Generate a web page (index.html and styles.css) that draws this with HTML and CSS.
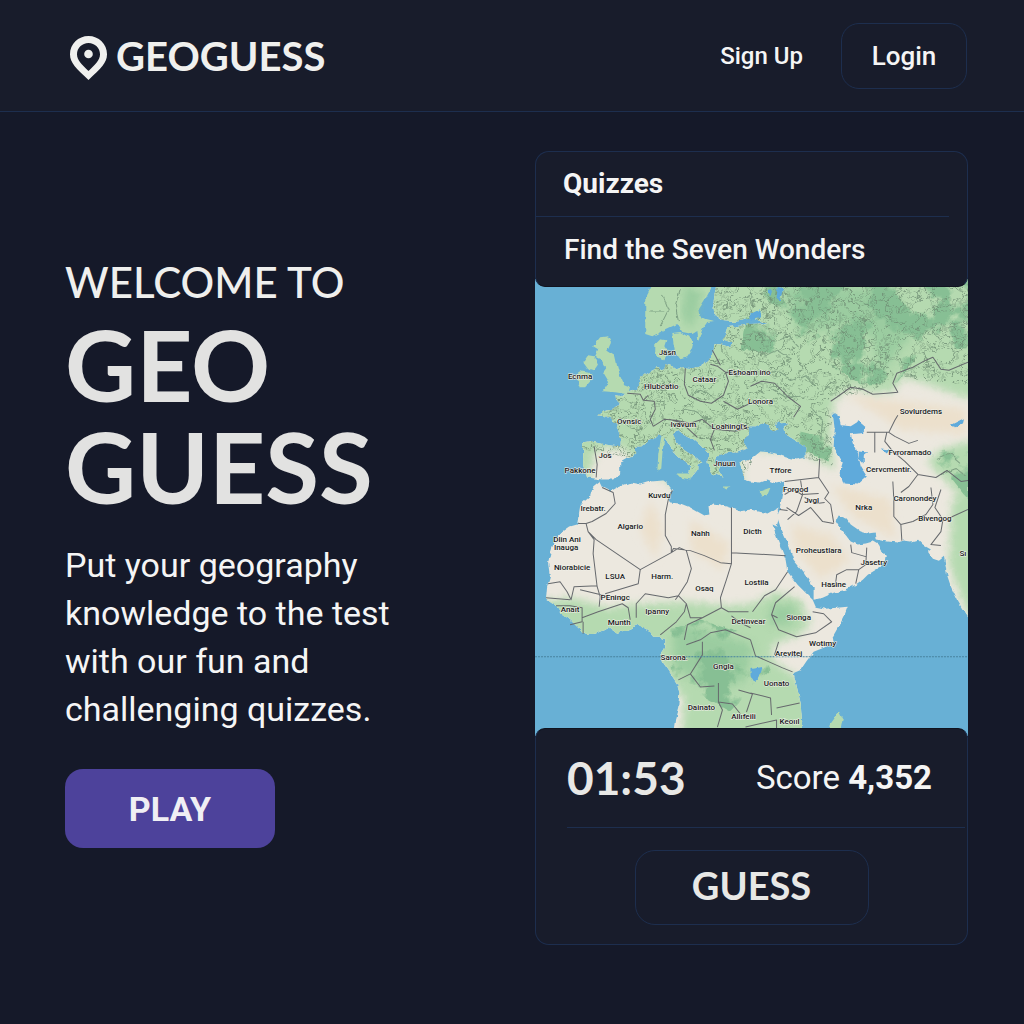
FILE: index.html
```html
<!DOCTYPE html>
<html lang="en">
<head>
<meta charset="utf-8">
<meta name="viewport" content="width=device-width, initial-scale=1">
<title>GeoGuess</title>
<link rel="stylesheet" href="styles.css">
</head>
<body>
<header class="site-header">
  <a class="brand" href="#">
    <svg class="brand-pin" viewBox="0 0 37 44" aria-hidden="true">
      <path fill-rule="evenodd" d="M18.500 0C8.300 0 0 8 0 18.200C0 27 6 32 18.500 44C31 32 37 27 37 18.200C37 8 28.700 0 18.500 0ZM18.500 7C24.900 7 30 12 30 18.200C30 24.500 25 28.500 18.500 35C12 28.500 7 24.500 7 18.200C7 12 12.100 7 18.500 7Z"/>
      <circle cx="18.500" cy="18" r="4.300"/>
    </svg>
    <span>GEOGUESS</span>
  </a>
  <nav class="site-nav">
    <a class="sign-up" href="#">Sign Up</a>
    <button class="outline-button login" type="button">Login</button>
  </nav>
</header>

<main class="hero">
  <section class="intro">
    <h1 class="title"><span class="eyebrow">WELCOME TO</span> GEO GUESS</h1>
    <p class="lead">Put your geography knowledge to the test with our fun and challenging quizzes.</p>
    <button class="play" type="button">PLAY</button>
  </section>

  <section class="game">
    <div class="panel panel-top">
      <h2 class="quiz-heading">Quizzes</h2>
      <p class="quiz-name">Find the Seven Wonders</p>
    </div>

    <svg class="map" viewBox="535 280 432 456" preserveAspectRatio="xMidYMid slice" role="img" aria-label="Map of Europe, Africa and Asia">
      <defs>
        <path id="eurasia" d="M583 443L590 442L600 444L611 446L620 447L621 440L616 425L612 420L605 417L598 416L605 412L617 408L620 404L617 400L616 396L622 397L627 393L637 390L640 378L650 372L656 370L657 367L661 370L664 369L665 365L672 367L676 370L683 368L692 369L700 367L708 362L713 352L714 345L720 345L730 348L731 343L723 340L727 328L738 327L750 325L768 324L750 319L735 323L722 322L714 316L713 305L714 296L717 280H970V622L962 610L956 600L950 587L946 575L945 567L943 557L938 561L932 559L927 552L930 550L923 546L917 540L910 542L903 541L897 543L886 542L875 540L874 533L867 534L860 532L850 525L846 519L843 518L838 516L835 522L840 530L846 537L850 542L857 545L865 544L872 542L877 545L880 551L885 555L884 561L880 567L867 575L862 580L855 585L845 590L833 593L822 598L813 600L813 588L803 572L793 560L787 543L780 528L777 518L779 510L782 493L783 482L776 484L767 480L759 483L750 482L743 480L742 470L739 464L743 462L750 460L760 452L771 453L783 457L795 460L805 458L805 448L793 440L785 435L784 429L788 423L782 424L778 422L774 426L778 430L773 432L767 425L761 424L757 427L750 427L748 433L744 440L743 443L747 449L737 453L727 453L717 457L714 462L720 466L718 471L722 477L716 475L713 476L708 467L707 461L709 455L700 446L693 440L684 436L677 430L673 435L677 443L683 450L692 456L696 459L703 463L697 465L697 470L691 478L688 472L690 467L684 462L673 453L668 444L663 437L658 435L653 440L647 442L641 447L635 447L636 455L627 458L620 462L620 473L613 480L602 480L595 479L587 478L583 467Z"/>
        <path id="africa" d="M599 482L602 488L610 492L617 488L630 483L640 485L650 482L662 481L668 485L672 491L668 498L670 503L680 504L690 508L697 512L704 516L709 515L708 507L712 504L720 505L730 508L740 512L750 510L767 514L777 508L778 520L776 527L772 525L777 540L785 560L787 572L797 585L812 600L815 607L825 609L847 607L844 615L840 623L832 637L833 643L823 648L813 652L806 661L800 670L793 673L797 690L800 703L802 728V740H672L675 718L678 707L679 693L677 684L673 678L668 670L663 663L660 655L665 648L665 640L658 637L653 637L647 630L638 625L627 630L617 633L610 628L602 631L595 634L587 635L577 627L570 620L560 613L555 605L546 599L547 587L550 577L548 563L551 551L555 540L563 532L570 527L577 525L580 507L583 503L590 497L593 487Z"/>
        <clipPath id="land">
          <use href="#eurasia"/>
          <use href="#africa"/>
        </clipPath>
        <filter id="soft" x="-10%" y="-10%" width="120%" height="120%"><feGaussianBlur stdDeviation="4"/></filter>
        <filter id="forest" x="0" y="0" width="100%" height="100%" color-interpolation-filters="sRGB">
          <feTurbulence type="fractalNoise" baseFrequency="0.030" numOctaves="5" seed="8"/>
          <feColorMatrix values="0 0 0 0 0.530  0 0 0 0 0.750  0 0 0 0 0.580  9 0 0 0 -4.200"/>
          <feComposite in2="SourceGraphic" operator="in"/>
        </filter>
        <filter id="relief" x="0" y="0" width="100%" height="100%" color-interpolation-filters="sRGB">
          <feTurbulence type="fractalNoise" baseFrequency="0.080" numOctaves="3" seed="3"/>
          <feColorMatrix values="0 0 0 0 0.430  0 0 0 0 0.550  0 0 0 0 0.450  0 1 0 0 0"/>
          <feComponentTransfer><feFuncA type="table" tableValues="0 0 0 0 0 0 0 0 0 0 0 0 0 0 0.800 0 0 0.400 0 0 0 0 0 0 0 0 0 0 0 0 0"/></feComponentTransfer>
          <feComposite in2="SourceGraphic" operator="in"/>
        </filter>
        <filter id="rough" x="-5%" y="-5%" width="110%" height="110%">
          <feTurbulence type="fractalNoise" baseFrequency="0.150" numOctaves="2" seed="5"/>
          <feDisplacementMap in="SourceGraphic" scale="4" xChannelSelector="R" yChannelSelector="G"/>
        </filter>
      </defs>

      <rect class="sea" x="525" y="270" width="452" height="476"/>

      <g filter="url(#rough)">
        <use class="desert" href="#eurasia"/>
        <use class="desert" href="#africa"/>
        <g clip-path="url(#land)">
          <g class="sand" filter="url(#soft)">
            <path d="M650 500L662 530L655 560L640 530Z"/>
            <path d="M690 520L730 545L722 570L690 550Z"/>
            <path d="M790 525L830 535L850 560L820 580L795 550Z"/>
            <path d="M830 485L890 500L895 540L850 515Z"/>
            <path d="M845 395L965 410V435L900 430Z"/>
          </g>
          <g class="green" filter="url(#soft)">
            <path d="M570 270H980V402L950 394L930 386L902 378L893 392L873 394L850 388L833 402L830 440L834 470L820 462L800 452L740 450L742 490L680 490L640 466L622 449L600 449L592 460L590 482L570 480Z"/>
            <path d="M926 462L940 450L975 440V520L955 492Z"/>
            <path d="M951 500L980 490V640L962 602L948 565Z"/>
            <path d="M535 603L575 598L605 608L640 604L690 602L725 606L752 604L775 592L800 600L810 625L796 636L772 645L772 660L795 676L815 700V745H680L684 700L650 650L540 640Z"/>
          </g>
          <g class="woods" filter="url(#soft)">
            <path d="M780 285L890 290L915 330L880 375L872 340L850 325L800 335Z"/>
            <path d="M672 632L690 625L752 645L745 680L720 690L675 670Z"/>
            <path d="M770 606L796 606L790 625L770 625Z"/>
          </g>
          <g filter="url(#forest)">
            <path d="M752 280H970V350L925 345L895 385H860L820 360L740 350Z"/>
            <path d="M790 430L832 440L828 462L800 450Z"/>
            <path d="M670 630L700 620L760 640L770 670L730 712L672 680Z"/>
            <path d="M930 455L967 445V500Z"/>
          </g>
          <path filter="url(#relief)" d="M570 270H975V385L925 382L895 375L870 394L830 398L832 465L760 450L740 480L640 460L580 450Z"/>
        </g>
        <g class="isle">
          <path d="M655 280L645 300V335L652 337L664 331L677 325L682 333L692 335L697 332L698 342L702 330L707 323L714 322L706 320L699 317L698 311L705 300L712 287V280Z"/>
          <path d="M655 353L655 345L660 340L666 341L664 347L668 353L664 360L658 358Z"/>
          <path d="M672 334L680 333L687 337L693 343L691 352L687 358L680 360L675 353L673 343Z"/>
          <path d="M600 338L608 337L611 343L607 352L615 357L617 366L620 377L624 386L629 388L627 395L615 393L603 392L609 383L603 373L606 369L601 360L595 357L598 350L593 347Z"/>
          <path d="M572 377L580 372L592 374L592 380L585 388L578 388L580 382Z"/>
          <path d="M583 363L588 356L594 357L598 366L594 372L588 370Z"/>
          <path d="M661 437L664 438L662 455L661 469L657 472L658 455Z"/>
          <path d="M676 474L691 474L690 480L680 478Z"/>
          <path d="M721 487L730 487L726 490Z"/>
          <path d="M759 492L770 488L767 495L761 496Z"/>
          <path d="M826 740L829 725L834 718L838 711L842 719L840 729L837 740Z"/>
        </g>
        <path class="woods" filter="url(#soft)" d="M684 287L702 293L692 330L682 318Z"/>
        <g class="lake">
          <path d="M832 413L838 417L840 426L850 427L858 422L865 428L861 434L850 435L852 443L857 453L860 467L866 477L857 485L843 484L839 473L842 463L833 447L834 430Z"/>
          <path d="M858 452L868 453L863 457L863 464L858 459Z"/>
          <path d="M880 449L889 450L886 454Z"/>
          <path d="M949 426L963 419L962 423L955 428Z"/>
          <path d="M750 315L760 310V319L750 321Z"/>
          <path d="M767 291L772 290L770 297Z"/>
          <path d="M777 288L783 289L779 302L776 300Z"/>
          <path d="M750 669L762 667L759 677L754 682L750 676Z"/>
        </g>
        <g class="minor">
          <path d="M745 336L760 333L774 343L788 337L798 348M752 350L766 356L776 351L790 360M758 375L778 372L792 381L804 376L818 390M772 390L785 398L800 397M812 410L822 421L820 440M680 290L675 306L678 322M662 295L668 311L660 327M650 312L664 312M690 397L700 391L712 396M685 410L695 412L708 420M936 460L950 454L960 463M940 475L955 469L965 477"/>
        </g>
      </g>

      <g class="borders">
        <path d="M685 369L684 385L688 396L700 402L711 404L723 396L728 382L725 373L717 367L710 365M725 373L737 375M723 402L737 410L750 404M627 394L640 395L643 401L654 402L655 410L650 420L653 427M643 401L648 396M653 427L664 420L675 421L690 424L702 420M669 420L682 424L697 438M702 420L714 430L710 440L714 451M714 430L735 432L748 428M728 372L750 376M750 387L761 382L774 384L788 398L800 407L793 418M712 351L720 366M594 447L597 465L596 478"/>
        <path d="M830 402L836 398L850 388L862 390L872 395L886 394L897 393L892 384L896 374L912 368L925 361L932 358L940 370L948 371L967 363M866 433H888L894 421L897 416M874 433V453M886 433L884 442L892 452L904 462L917 475L935 478L946 471L960 482L967 481M888 433L894 437L908 444L917 441M917 475L908 487L900 493M892 482L893 500V517L900 525L912 522L925 515L932 505L930 488M900 525L901 541M940 490L934 508L942 520L940 532L930 545L940 546M945 520L967 510M819 459L818 478L784 482M818 478L828 493L824 499L830 505L833 523M784 495L793 490L801 495L818 494M800 481L802 495L796 512L787 520M804 498L816 504L824 503M786 508L798 516L810 508L822 522L833 524M779 510L787 511M850 545L851 553L865 557M866 548L865 565L858 570L855 584M835 583L836 575L846 570L858 570"/>
        <path d="M602 488L613 493L615 504L606 514L592 522L586 524L578 524M586 524L588 532L596 540L640 570L671 553M588 532L594 540L593 554L597 587L600 597L599 607M548 584L560 582L567 592L571 600L574 587L597 586M546 598L570 600M580 590L605 596M640 570L638 584L605 594M672 491L668 500L665 515L665 536L671 547V553L679 548L686 551L691 569L687 582L678 596L675 600M671 553L673 549L690 551L704 556L720 563L731 564L731 508M731 553L785 556M731 564L726 580L720 598L721 608L728 612L748 612M636 618L636 604L645 594L668 598L678 596L686 604L684 612L676 622L660 635M686 604L690 618L702 618L721 608M702 618L687 625L684 640M731 616L740 623L750 628M556 606L570 606L582 608V622L570 625M582 618L598 612L622 604L628 608L630 620M583 634L583 622M777 618L771 615L775 603L794 587M771 615L778 630L796 637L815 633L831 622L823 614L812 612M686 645L700 640L710 633L725 630L750 640M702 642L702 655L690 674L678 680M690 674L700 687L714 686M718 683V702L732 704L740 714M718 702L722 710L717 727M750 640L755 656L782 668L792 672M774 655L778 642M750 693L770 698L771 715M776 708L799 703M745 727L776 720L776 728M738 690L752 694L746 712M787 572L775 590L764 596L752 612"/>
      </g>

      <path class="equator" d="M535 657H967"/>

      <g class="labels">
        <text x="667" y="356">Jäsn</text><text x="580" y="380">Ecnma</text>
        <text x="661" y="390">Hlubcatio</text><text x="704" y="383">Cataar</text>
        <text x="749" y="376">Eshoam ino</text><text x="760" y="405">Lonora</text>
        <text x="629" y="425">Ovnsic</text><text x="683" y="428">Ivavum</text>
        <text x="729" y="430">Loahingl's</text><text x="605" y="459">Jos</text>
        <text x="580" y="474">Pakkone</text><text x="724" y="467">Jnuun</text>
        <text x="780" y="474">Tffore</text><text x="920" y="415">Sovlurdems</text>
        <text x="909" y="456">Fvroramado</text><text x="888" y="473">Cervcmentir.</text>
        <text x="914" y="501">Caronondey</text><text x="934" y="521">Bivengog</text>
        <text x="863" y="510">Nrka</text><text x="795" y="493">Forgod</text>
        <text x="811" y="503">Jvgl</text><text x="659" y="499">Kuvdu</text>
        <text x="593" y="511">Irebatr.</text><text x="630" y="529">Algario</text>
        <text x="700" y="536">Nahh</text><text x="752" y="534">Dicth</text>
        <text x="567" y="542">Dlin Ani</text><text x="566" y="550">Inauga</text>
        <text x="572" y="570">Niorabicie</text><text x="615" y="579">LSUA</text>
        <text x="662" y="579">Harm.</text><text x="704" y="591">Osaq</text>
        <text x="756" y="585">Lostila</text><text x="818" y="553">Proheustlara</text>
        <text x="833" y="587">Hasine</text><text x="873" y="565">Jasetry</text>
        <text x="615" y="600">PEningc</text><text x="570" y="612">Anaıt</text>
        <text x="619" y="625">Munth</text><text x="657" y="614">Ipanny</text>
        <text x="748" y="624">Detinvear</text><text x="798" y="620">Sionga</text>
        <text x="822" y="646">Wotimy</text><text x="788" y="656">Arevitej</text>
        <text x="674" y="660">Sarona.</text><text x="723" y="669">Gngla</text>
        <text x="776" y="686">Uonato</text><text x="701" y="710">Dainato</text>
        <text x="743" y="719">Allıfeili</text><text x="789" y="724">Keoııl</text>
        <text x="962" y="556">Sı</text>
      </g>
    </svg>

    <div class="panel panel-bottom">
      <div class="stats">
        <time class="timer">01:53</time>
        <p class="score">Score <strong>4,352</strong></p>
      </div>
      <button class="outline-button guess" type="button">GUESS</button>
    </div>
  </section>
</main>
</body>
</html>
```

FILE: styles.css
```css
:root {
  --page: #151929;
  --surface: #181c2b;
  --line: #1d2e4e;
  --text: #f5f5f5;
  --display: Lato, "Liberation Sans", sans-serif;
  --body: Roboto, "Liberation Sans", sans-serif;
}

* {
  box-sizing: border-box;
}

body {
  margin: 0;
  min-height: 100vh;
  background: var(--page);
  color: var(--text);
  font-family: var(--body);
}

h1, h2, p {
  margin: 0;
}

a {
  color: inherit;
  text-decoration: none;
}

button {
  color: inherit;
  cursor: pointer;
}

.site-header {
  display: flex;
  align-items: center;
  justify-content: space-between;
  height: 112px;
  padding: 0 57px 0 70px;
  background: var(--surface);
  border-bottom: 1px solid var(--line);
}

.brand {
  display: flex;
  align-items: flex-end;
  gap: 9px;
  color: #f0f0ee;
  font: 700 40px/48px var(--display);
}

.brand-pin {
  width: 37px;
  height: 44px;
  fill: currentColor;
}

.site-nav {
  display: flex;
  align-items: center;
  gap: 38px;
}

.sign-up {
  font-size: 24px;
  font-weight: 500;
}

.outline-button {
  background: transparent;
  border: 1px solid var(--line);
  border-radius: 18px;
}

.login {
  width: 126px;
  height: 66px;
  font: 500 26px/32px var(--body);
}

.hero {
  display: grid;
  grid-template-columns: minmax(0, 470fr) minmax(0, 433fr);
  padding: 39px 56px 80px 65px;
}

.intro {
  padding-top: 104px;
}

.title {
  max-width: 340px;
  color: #e2e2e1;
  font: 700 98px/102px var(--display);
}

.eyebrow {
  display: block;
  margin-bottom: 4px;
  color: #efefed;
  font-size: 42px;
  font-weight: 500;
  line-height: 54px;
  white-space: nowrap;
}

.lead {
  max-width: 340px;
  margin-top: 24px;
  font-size: 34px;
  line-height: 48px;
}

.play {
  width: 210px;
  height: 79px;
  margin-top: 36px;
  background: #4d429b;
  border: 0;
  border-radius: 18px;
  color: #f0eff4;
  font: 700 34px/40px var(--body);
}

.game {
  display: flex;
  flex-direction: column;
}

.panel {
  position: relative;
  background: var(--surface);
  border: 1px solid var(--line);
}

.panel-top {
  border-bottom-color: #10131f;
  border-radius: 14px 14px 10px 10px;
}

.quiz-heading {
  margin-right: 18px;
  padding: 16px 27px;
  border-bottom: 1px solid var(--line);
  font-size: 28px;
  font-weight: 700;
  line-height: 32px;
}

.quiz-name {
  padding: 16px 28px 19px;
  font-size: 28px;
  font-weight: 500;
  line-height: 34px;
}

.map {
  display: block;
  width: 100%;
  margin: -8px 0;
}

.sea { fill: #68b0d5; }
.desert { fill: #ece8df; }
.sand { fill: #ece0cc; }
.green { fill: #b5dab0; }
.woods { fill: #8ac496; opacity: 0.6; }
.isle { fill: #b5dab0; }
.lake { fill: #5faadb; }

.borders,
.minor {
  fill: none;
  stroke: #66696d;
  stroke-width: 1px;
  stroke-linejoin: round;
}

.minor {
  stroke: #7fa184;
}

.equator {
  stroke: #47829f;
  stroke-dasharray: 2 1;
}

.labels {
  fill: #18191c;
  font: 500 8px var(--body);
  text-anchor: middle;
  stroke: #f2f2ea;
  stroke-width: 1px;
  paint-order: stroke;
}

.panel-bottom {
  display: flex;
  flex-direction: column;
  align-items: center;
  padding-bottom: 19px;
  border-top-color: #10131f;
  border-radius: 10px 10px 14px 14px;
}

.stats {
  display: flex;
  align-items: center;
  justify-content: space-between;
  align-self: stretch;
  height: 99px;
  margin: 0 2px 22px 31px;
  padding-right: 33px;
  border-bottom: 1px solid var(--line);
}

.timer {
  color: #e8e8e6;
  font: 700 46px/56px var(--display);
}

.score {
  font-size: 33px;
  line-height: 40px;
}

.score strong {
  font-weight: 700;
}

.guess {
  width: 234px;
  height: 75px;
  padding-bottom: 6px;
  border-radius: 20px;
  color: #e8e8e6;
  font: 700 38px/44px var(--display);
}

@media (max-width: 800px) {
  .hero {
    grid-template-columns: minmax(0, 1fr);
    gap: 40px;
  }
}
```
